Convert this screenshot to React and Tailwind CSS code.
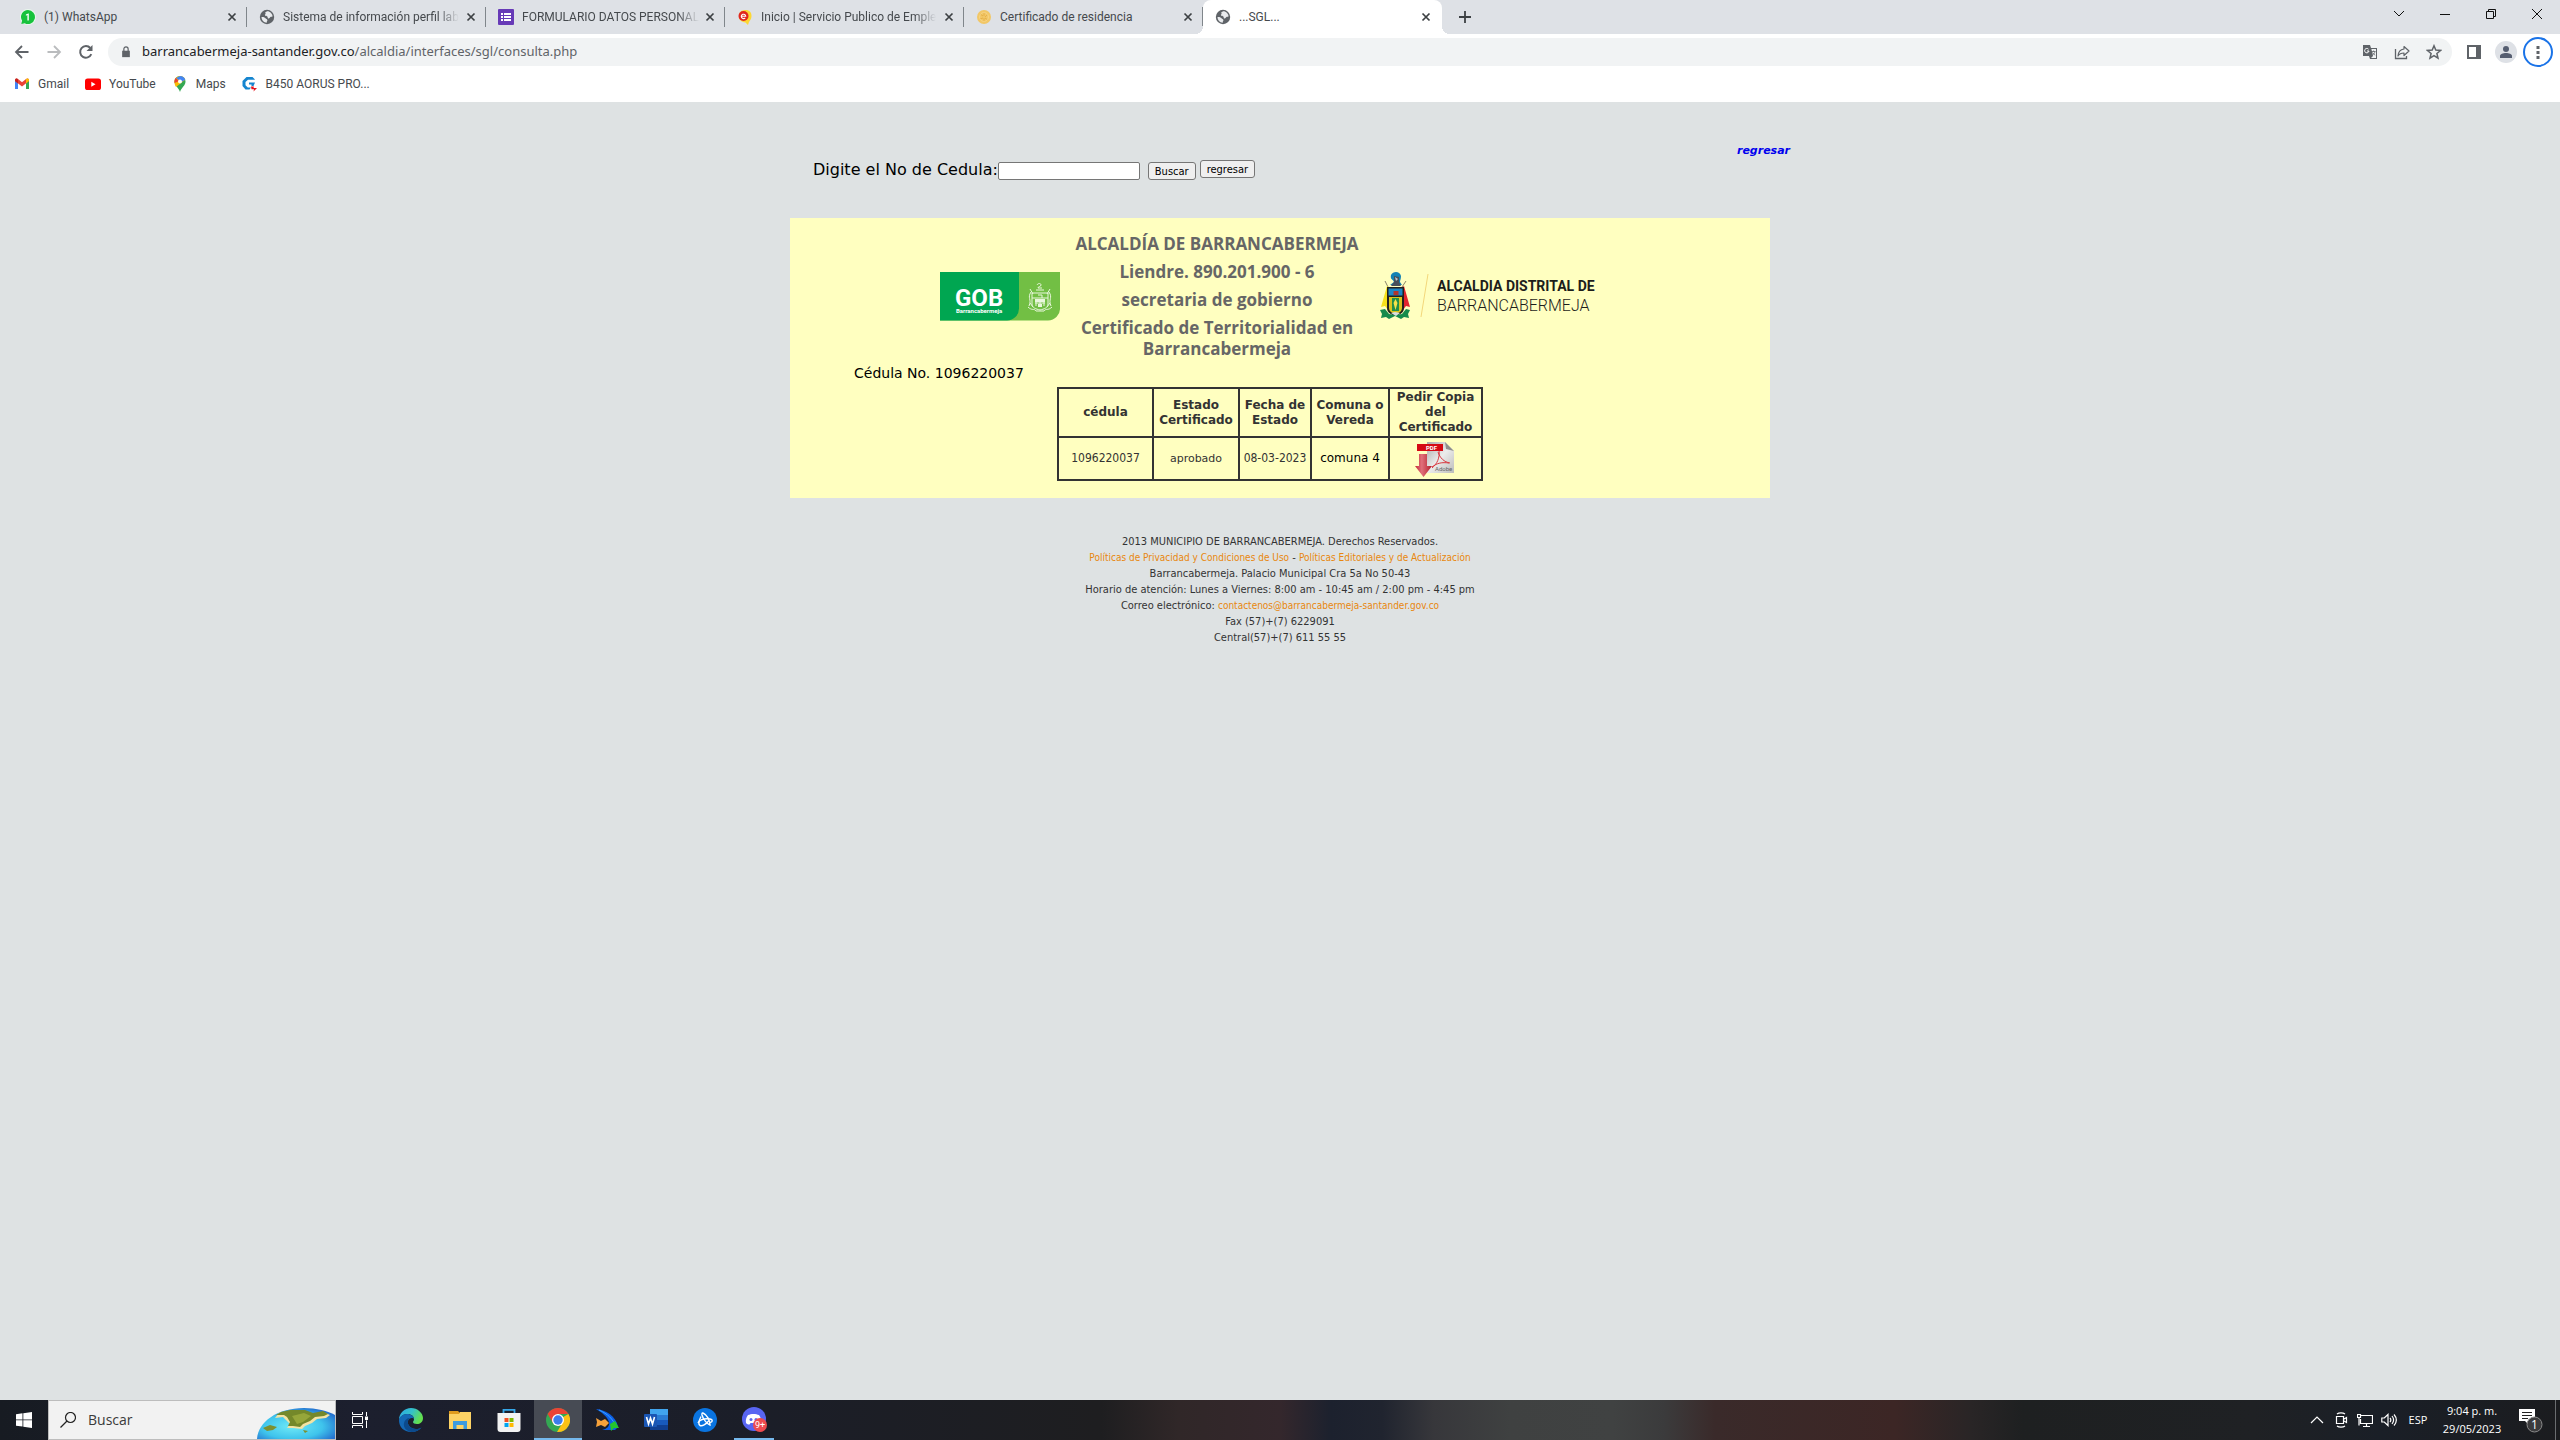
import React from "react";

/* ---------- favicons ---------- */

const WhatsAppIcon = () => (
  <svg viewBox="0 0 16 16" className="size-4 shrink-0">
    <circle cx="8" cy="8" r="8" fill="#e8f8ec" />
    <path d="M8 1a7 7 0 1 1-3.3 13.2L1.3 15l.8-3.3A7 7 0 0 1 8 1z" fill="#17c23c" />
    <path d="M8.8 4.4v7H7.4V6.1l-1.5.6V5.5l2.3-1.1z" fill="#fff" />
  </svg>
);

const GlobeIcon = () => (
  <svg viewBox="0 0 16 16" className="size-4 shrink-0">
    <circle cx="8" cy="8" r="7.2" fill="#5f6368" />
    <path
      d="M2.5 8c1.500-.2 3 .2 4 1.200.6.800 1.700.8 1.900 1.800.1 1-.9 1.300-.6 2.800C4.800 13.600 2.600 11.200 2.500 8zM6 4c.8-1.300 2.300-1.900 3.800-1.600 2.200.8 3.600 2.600 3.800 4.800-.8.8-1.600.2-2.200.9-.8.900-1.200 1.900-2.300 1.300-.8-.500 0-1.500-.8-2C7.400 6.900 6 7.200 5.900 6.100 5.700 5.200 6.900 5.200 6.900 4.700c0-.3-.9-.2-.9-.7z"
      fill="#e9ebee"
    />
  </svg>
);

const FormsIcon = () => (
  <svg viewBox="0 0 16 16" className="size-4 shrink-0">
    <rect width="16" height="16" rx="1" fill="#673ab7" />
    <path d="M3 4h2v2H3zM6 4h7v2H6zM3 7h2v2H3zM6 7h7v2H6zM3 10h2v2H3zM6 10h7v2H6z" fill="#fff" />
  </svg>
);

const EmpleoIcon = () => (
  <svg viewBox="0 0 16 16" className="size-4 shrink-0">
    <path d="M8.500 1c4 0 6 2.500 6 6 0 3-1.500 4.500-2.500 6l-1 3-2.500-2.500C4 13 2 11 2 7s2.500-6 6.500-6z" fill="#fdd835" />
    <circle cx="6.500" cy="7" r="5" fill="#e0261f" />
    <path d="M4.300 7.200h4.400A2.200 2.200 0 1 0 8.200 8.800" fill="none" stroke="#fff" strokeWidth="1.100" />
  </svg>
);

const SealIcon = () => (
  <svg viewBox="0 0 16 16" className="size-4 shrink-0">
    <circle cx="8" cy="8" r="7" fill="#f2c766" />
    <path d="M4 5l3 2M8 3v4M12 5L9 8M4 10l3-1M8 13V9M12 11L9 9" stroke="#e6b048" strokeWidth="1" />
    <circle cx="8" cy="8" r="4.500" fill="none" stroke="#f6d68c" strokeWidth=".8" />
  </svg>
);

/* ---------- browser icons ---------- */

const CloseIcon = () => (
  <svg viewBox="0 0 16 16" className="size-4">
    <path d="M4.500 4.500l7 7M11.500 4.500l-7 7" stroke="#3c4043" strokeWidth="1.700" />
  </svg>
);

const BackIcon = ({ flip, color }) => (
  <svg viewBox="0 0 16 16" className="size-4">
    <path
      d={flip ? "M1.500 8h12M8 2l6 6-6 6" : "M14.500 8h-12M8 2L2 8l6 6"}
      fill="none"
      stroke={color}
      strokeWidth="1.800"
    />
  </svg>
);

const ReloadIcon = () => (
  <svg viewBox="0 0 16 16" className="size-4">
    <path d="M13.300 10.200A5.800 5.800 0 1 1 12.300 4" fill="none" stroke="#5f6368" strokeWidth="2" />
    <path d="M14.500 1v6h-6z" fill="#5f6368" />
  </svg>
);

const LockIcon = () => (
  <svg viewBox="0 0 12 14" className="h-3 w-4">
    <path d="M1.500 5.500h9V13h-9z" fill="#5f6368" />
    <path d="M3.500 6V3.500a2.500 2.500 0 0 1 5 0V6" fill="none" stroke="#5f6368" strokeWidth="1.400" />
  </svg>
);

const TranslateIcon = () => (
  <svg viewBox="0 0 16 16" className="size-4">
    <path d="M1 1h7l1 3h6v11H8l-1-3H1z" fill="#5f6368" />
    <path d="M9.400 5H14v9H9l2-2z" fill="#f1f3f4" />
    <path d="M6.500 5.200A2.200 2.200 0 1 0 7 7H5" fill="none" stroke="#fff" strokeWidth="1" />
    <path d="M9.800 7.500h3.700M11.600 6.500v1M13 7.500c-.4 1.800-1.500 3-2.800 3.800M10.500 8.500c.6 1.200 1.500 2 2.700 2.700" fill="none" stroke="#5f6368" strokeWidth=".8" />
  </svg>
);

const ShareIcon = () => (
  <svg viewBox="0 0 16 16" className="size-4">
    <path d="M1.500 5v9.500h11V12" fill="none" stroke="#5f6368" strokeWidth="1.300" />
    <path d="M10 2.500L15 7l-5 4.500V9C7.500 9 5.500 9.500 4 12c.2-4 2.500-6.500 6-7z" fill="none" stroke="#5f6368" strokeWidth="1.200" strokeLinejoin="round" />
  </svg>
);

const StarIcon = () => (
  <svg viewBox="0 0 16 16" className="size-4">
    <path d="M8 1.800l1.800 4.300 4.700.4-3.600 3 1.100 4.600L8 11.600l-4 2.500 1.100-4.600-3.600-3 4.700-.4z" fill="none" stroke="#5f6368" strokeWidth="1.500" />
  </svg>
);

const SidePanelIcon = () => (
  <svg viewBox="0 0 16 16" className="size-4">
    <path d="M1 1h14v14H1zM3 3v10h7V3z" fill="#5f6368" fillRule="evenodd" />
  </svg>
);

const GmailIcon = () => (
  <svg viewBox="0 0 16 16" className="size-4 shrink-0">
    <path d="M1 4v9h3V7z" fill="#4285f4" />
    <path d="M15 4v9h-3V7z" fill="#34a853" />
    <path d="M1 4.200C1 2.500 2.800 2 4 3l4 3.200L12 3c1.200-1 3-.5 3 1.200V5l-7 5.500L1 5z" fill="#ea4335" />
    <path d="M12 3c1.200-1 3-.5 3 1.200V5l-3 2.400z" fill="#fbbc04" />
    <path d="M1 4.200C1 2.500 2.800 2 4 3v4.400L1 5z" fill="#c5221f" />
  </svg>
);

const YouTubeIcon = () => (
  <svg viewBox="0 0 16 16" className="size-4 shrink-0">
    <rect y="2.500" width="16" height="11.500" rx="2.600" fill="#f00" />
    <path d="M6.300 5.800v5L10.500 8.300z" fill="#fff" />
  </svg>
);

const MapsIcon = () => (
  <svg viewBox="0 0 16 16" className="size-4 shrink-0">
    <path d="M8 0a5.500 5.500 0 0 1 5.500 5.500C13.500 10 9.500 11 8 16 6.500 11 2.500 10 2.500 5.500A5.500 5.500 0 0 1 8 0z" fill="#34a853" />
    <path d="M8 0a5.500 5.500 0 0 1 5.200 3.700L4 11C3 9.500 2.500 8 2.500 5.500A5.500 5.500 0 0 1 8 0z" fill="#fbbc04" />
    <path d="M8 0a5.500 5.500 0 0 1 5.200 3.700L9.500 6 4 2z" fill="#4285f4" />
    <path d="M3.800 2L7 5 2.600 7C2.200 5 2.700 3.200 3.800 2z" fill="#ea4335" />
    <circle cx="8" cy="5.500" r="2" fill="#fff" />
  </svg>
);

const GigaIcon = () => (
  <svg viewBox="0 0 16 16" className="size-4 shrink-0">
    <path d="M13 3.500L10.500 1H4.500L.5 5v5l3 3.500h4L9 11.500H5.800l-2.300-2.200V6L6 3.800h6.500zM7 6.500h6L11.500 10h-2V8.500H7z" fill="#1585cf" />
    <path d="M9 10.500h3L11.500 12H15l-3.500 3.500.5-2.300H9.500z" fill="#e5141d" />
  </svg>
);

/* ---------- crest and document drawings ---------- */

const GobLogo = () => (
  <svg viewBox="0 0 120 49" className="h-[49px] w-[120px] shrink-0" role="img" aria-label="GOB Barrancabermeja">
    <path d="M0 0h120v36a12 12 0 0 1-12 12.500H0z" fill="#72bf44" />
    <path d="M0 0h79v36a12 12 0 0 1-12 12.500H0z" fill="#00a651" />
    <text x="15" y="34" fontSize="24" fontWeight="700" fill="#fff" className="font-['Roboto',sans-serif]">GOB</text>
    <text x="16" y="41" fontSize="6" fontWeight="700" fill="#fff" className="font-['Roboto',sans-serif]">Barrancabermeja</text>
    <g fill="none" stroke="#e9f7dc" strokeWidth="1">
      <path d="M97 13c1-2 4-2 4 0s-3 1-3 3h4M96 18h8M90 17l3 5M110 17l-3 5" />
      <path d="M92 21h16v11c0 4-4 5-8 6-4-1-8-2-8-6zM92 26h16M95 31h10M98 23h4v3M96 28v6M104 28v6M100 29v6" />
      <path d="M91 20c-4 6 1 7-2 14M109 20c4 6-1 7 2 14M88 35c4 4 6 1 8 4h8c2-3 4 0 8-4M93 35l-3-4M107 35l3-4" />
    </g>
    <path d="M95 27h10v3H95zM98 32h4v3h-4z" fill="#e9f7dc" />
  </svg>
);

const Crest = () => (
  <svg viewBox="0 0 30 48" className="h-12 w-[30px] shrink-0" aria-hidden="true">
    <path d="M5 9l3 6M26 9l-4 6" stroke="#8a8468" strokeWidth="1" />
    <path d="M7 14L1 35l4-1 3 4 2-4V16z" fill="#f6e01b" />
    <path d="M24 14l6 21-4-1-3 4-2-4V16z" fill="#e2232e" />
    <path d="M11 3c2-4 9-4 10 1 0 3-1 4-1 6l2 3H10l4-3c-1-3-4-2-3-7z" fill="#1482b4" />
    <path d="M14 4l5 1v5l2 4H11l3-4z" fill="#48505a" />
    <path d="M15 5l3 2-2 2z" fill="#c4cbd2" />
    <path d="M7 15h17v21c0 5-5 7-8.500 8C12 43 7 41 7 36z" fill="#23211d" />
    <path d="M8.500 16.500h14v7h-14z" fill="#1c86c7" />
    <path d="M13.500 19h5v4h-5z" fill="#b0342d" />
    <path d="M9 25h13v11c0 4-4 5-6.500 6C13 41 9 40 9 36z" fill="#d9c41e" />
    <path d="M12 26h7v13h-7z" fill="#238f49" />
    <path d="M15.500 27l2 4-2 7-2-7z" fill="#f4e44a" />
    <path d="M0 38l5-1 4 5 6 1 7-1 4-5 4 1-2 4 1 4-5-1-3 2-6-3-6 3-3-2-5 1 1-4z" fill="#158a4c" />
    <path d="M11 41l4-1 5 1-4 3z" fill="#d8dde0" />
  </svg>
);

const PdfIcon = () => (
  <svg viewBox="0 0 40 36" className="h-9 w-10" aria-hidden="true">
    <defs>
      <linearGradient id="sheet" x1="0" y1="0" x2="1" y2="1">
        <stop offset="0" stopColor="#a8a8a6" />
        <stop offset=".5" stopColor="#ececec" />
        <stop offset="1" stopColor="#bdbdbb" />
      </linearGradient>
      <linearGradient id="arrow" x1="0" y1="0" x2="1" y2="0">
        <stop offset="0" stopColor="#c62a38" />
        <stop offset=".4" stopColor="#e0707a" />
        <stop offset="1" stopColor="#b31d2a" />
      </linearGradient>
    </defs>
    <path d="M13 1h18l9 9v22H13z" fill="url(#sheet)" />
    <path d="M31 1l9 9-8-2z" fill="#8f8f8d" />
    <path d="M25 9c1 8-2 14-7 18M24 11c2 6 6 10 12 11M18 26c5-4 10-5 17-4" fill="none" stroke="#d9383f" strokeWidth="1" />
    <path d="M3 3h26v7H3z" fill="#d50a14" />
    <text x="12" y="9" fontSize="6" fontWeight="700" fill="#fff" className="font-['Roboto',sans-serif]">PDF</text>
    <text x="21" y="30" fontSize="6" fill="#666" className="font-['Roboto',sans-serif]">Adobe</text>
    <path d="M5 13h8v12h5L9.500 36 1 25h4z" fill="url(#arrow)" />
  </svg>
);

/* ---------- taskbar drawings ---------- */

const WindowsIcon = () => (
  <svg viewBox="0 0 16 16" className="size-4">
    <path d="M0 2.200L6.500 1.300v6.200H0zM7.300 1.200L16 0v7.500H7.300zM0 8.300h6.500v6.200L0 13.700zM7.300 8.300H16V16l-8.700-1.300z" fill="#fff" />
  </svg>
);

const EarthArt = () => (
  <svg viewBox="0 0 78 31" className="h-[31px] w-[78px] shrink-0 self-end" aria-hidden="true">
    <defs>
      <radialGradient id="sea" cx=".45" cy=".6" r=".65">
        <stop offset="0" stopColor="#6fe9f6" />
        <stop offset=".6" stopColor="#3fc4ec" />
        <stop offset="1" stopColor="#2470cf" />
      </radialGradient>
    </defs>
    <path d="M0 31C1 14 20 0 47 0c12 0 24 3 31 7v24z" fill="url(#sea)" />
    <path d="M22 5l10-2 16 0 8 3 10-2 7 3-4 3-9 1-5 4-7 3-3 3-9-1-6 0 3-4-4-4-3-3-8 1z" fill="#f3e3a4" />
    <path d="M24 4l9-2 15 0 8 3 10-2 5 3-4 2-9 1-5 4-7 3-3 3-7-1-5 0 2-4-3-5-3-2-8 0z" fill="#74882a" />
    <path d="M35 8l12-3 7 3-8 6-6 2z" fill="#96a63a" />
    <path d="M6 20l7-3 7 2-4 3-6 1z" fill="#7d902f" />
    <path d="M46 22l5 1-3 2z" fill="#7d902f" />
  </svg>
);

const TaskViewIcon = () => (
  <svg viewBox="0 0 16 16" className="size-4">
    <path d="M.5 0v2.500h10V0M.5 16v-2.500h10V16M.5 4.500h10v7H.5zM14.500 0v4M14.500 8.500V16" fill="none" stroke="#fff" strokeWidth="1" />
    <path d="M13 4.500h3V8h-3z" fill="#fff" />
  </svg>
);

const EdgeIcon = () => (
  <svg viewBox="0 0 24 24" className="size-6">
    <defs>
      <linearGradient id="edgeTop" x1="0" y1="0" x2="1" y2=".4">
        <stop offset="0" stopColor="#2aa7e8" />
        <stop offset=".55" stopColor="#35c1c9" />
        <stop offset="1" stopColor="#63e04f" />
      </linearGradient>
    </defs>
    <path d="M0 12C0 5 5.500 0 12 0s12 5 12 10c0 4-3 6-6 6-2.500 0-4-1-4-2s1-1 1-3c0-2.500-2.500-5-6.500-5C4 6 1 9 0 12z" fill="url(#edgeTop)" />
    <path d="M0 12.500C0 9 3.500 6 8 6c4 0 7 2.500 7 5-1-1.500-5-1.500-6 2-1 4 3 8 8 8 2 0 3.500-.5 5.500-1.500C20.500 22 17 24 12 24 5 24 0 19 0 12.500z" fill="#1468b5" />
    <path d="M9 13c-1 4 3 8 8 8 2 0 3.500-.5 5.500-1.500C20.500 22 17 24 12.500 24 7 23 4 19 5 15c.5-3 3-5 6-5-1 .5-2 2-2 3z" fill="#0c4a8c" />
  </svg>
);

const FolderIcon = () => (
  <svg viewBox="0 0 24 24" className="size-6">
    <path d="M1 3h9l2 2h11v4H1z" fill="#e09c1e" />
    <path d="M1 6h10l1-2h11v17H1z" fill="#fdd365" />
    <path d="M5 13h14v8h-3.500v-4h-7v4H5z" fill="#3c9be0" />
  </svg>
);

const StoreIcon = () => (
  <svg viewBox="0 0 24 24" className="size-6">
    <path d="M6.500 7V1.800h11V7" fill="none" stroke="#35a7e8" strokeWidth="1.800" />
    <path d="M.5 5h23v16a3 3 0 0 1-3 3h-17a3 3 0 0 1-3-3z" fill="#f2f2f2" />
    <path d="M7.500 10h4v4h-4z" fill="#f25022" />
    <path d="M12.500 10h4v4h-4z" fill="#7fba00" />
    <path d="M7.500 15h4v4h-4z" fill="#00a4ef" />
    <path d="M12.500 15h4v4h-4z" fill="#ffb900" />
  </svg>
);

const ChromeIcon = () => (
  <svg viewBox="0 0 24 24" className="size-6">
    <circle cx="12" cy="12" r="12" fill="#34a853" />
    <path d="M12 12L22.400 6A12 12 0 0 1 12 24l-1-.1L17 14z" fill="#fbc116" />
    <path d="M12 6h10.400A12 12 0 0 0 1.600 6L7 15z" fill="#ea4335" />
    <circle cx="12" cy="12" r="6" fill="#fff" />
    <circle cx="12" cy="12" r="4.700" fill="#3b7ded" />
  </svg>
);

const FishIcon = () => (
  <svg viewBox="0 0 24 24" className="size-6">
    <path d="M1 1c10 1 20 7 22 18l-3 3-13 0c5-1 8-4 7-8C12 8 6 4 1 1z" fill="#0c5fe8" />
    <path d="M4 2c9 4 14 9 17 17" fill="none" stroke="#3aa4ff" strokeWidth="1" />
    <path d="M1 10l5 3 4-2 4 4-4 4-4-2-5 2 1-5z" fill="#f6a13a" />
    <path d="M15 16l5-3 4 7-5 0-3 3z" fill="#24c52e" />
  </svg>
);

const WordIcon = () => (
  <svg viewBox="0 0 24 24" className="size-6">
    <path d="M6 1h18v6H6z" fill="#41a5ee" />
    <path d="M6 7h18v5H6z" fill="#2b7cd3" />
    <path d="M6 12h18v5H6z" fill="#185abd" />
    <path d="M6 17h18v5H6z" fill="#103f91" />
    <rect y="6" width="13" height="13" rx="1" fill="#1a56b4" />
    <path d="M2.500 9l2 7 2-6 2 6 2-7" fill="none" stroke="#fff" strokeWidth="1.600" />
  </svg>
);

const BattleNetIcon = () => (
  <svg viewBox="0 0 24 24" className="size-6">
    <circle cx="12" cy="12" r="12" fill="#0a74e0" />
    <g fill="none" stroke="#fff" strokeWidth="1.400">
      <path d="M10 5c4 2 7 7 7 12-3-1-7-6-8-10-.3-1.500.2-2.500 1-2z" />
      <path d="M5 15c1-3 6-5 12-4 3 .6 3 2.600 0 3.600" />
      <path d="M8 8.500c-2 4-2.500 8-1 9 2 1 6-1 9-5" />
    </g>
  </svg>
);

const DiscordIcon = () => (
  <svg viewBox="0 0 26 26" className="size-[26px]">
    <circle cx="13" cy="12" r="12" fill="#5865f2" />
    <path d="M7 8c3-1.500 8-1.500 11 0 2 3 2.500 5 2 8-1 1-2 1.500-3.500 1.500L15.500 16h-6l-1 1.500c-1.500 0-2.500-.5-3.500-1.500C4.500 13 5 11 7 8z" fill="#fff" />
    <circle cx="10" cy="12.500" r="1.500" fill="#5865f2" />
    <circle cx="15" cy="12.500" r="1.500" fill="#5865f2" />
    <circle cx="19" cy="18" r="7" fill="#ee4b50" />
    <text x="19" y="21" fontSize="9" textAnchor="middle" fill="#fff" className="font-['Roboto',sans-serif]">9+</text>
  </svg>
);

/* ---------- data ---------- */

const tabs = [
  { title: "(1) WhatsApp", Icon: WhatsAppIcon },
  { title: "Sistema de información perfil lab", Icon: GlobeIcon, fade: true },
  { title: "FORMULARIO DATOS PERSONAL", Icon: FormsIcon, fade: true },
  { title: "Inicio | Servicio Publico de Emple", Icon: EmpleoIcon, fade: true },
  { title: "Certificado de residencia", Icon: SealIcon },
];

const bookmarks = [
  { label: "Gmail", Icon: GmailIcon },
  { label: "YouTube", Icon: YouTubeIcon },
  { label: "Maps", Icon: MapsIcon },
  { label: "B450 AORUS PRO...", Icon: GigaIcon },
];

const apps = [
  { name: "Edge", Icon: EdgeIcon },
  { name: "Explorador de archivos", Icon: FolderIcon },
  { name: "Store", Icon: StoreIcon },
  { name: "Chrome", Icon: ChromeIcon, state: "active" },
  { name: "Juego", Icon: FishIcon },
  { name: "Word", Icon: WordIcon },
  { name: "Battle.net", Icon: BattleNetIcon },
  { name: "Discord", Icon: DiscordIcon, state: "open" },
];

const condensed = "font-['DejaVu_Sans_Condensed','DejaVu_Sans',sans-serif]";

/* ---------- browser chrome ---------- */

function Tab({ title, Icon, fade }) {
  return (
    <div className="flex h-full w-[239px] min-w-0 items-center">
      <button className="flex min-w-0 flex-1 items-center gap-2 pl-3 text-left">
        <Icon />
        <span
          className={`whitespace-nowrap ${fade ? "[mask-image:linear-gradient(to_right,black_88%,transparent)]" : ""}`}
        >
          {title}
        </span>
      </button>
      <button aria-label="Cerrar pestaña" className="mr-1.5 ml-1">
        <CloseIcon />
      </button>
      <span className="h-5 w-px bg-[#80868b]" />
    </div>
  );
}

function TabStrip() {
  return (
    <div className="flex h-[34px] items-center bg-[#dee1e6] pl-2 text-xs text-[#45494d]">
      {tabs.map((t) => (
        <Tab key={t.title} {...t} />
      ))}
      <div className="relative flex h-full w-[239px] items-center rounded-t-lg bg-white">
        <span className="absolute bottom-0 -left-2 size-2 bg-[radial-gradient(circle_at_0_0,#dee1e6_8px,#ffffff_8px)]" />
        <span className="absolute -right-2 bottom-0 size-2 bg-[radial-gradient(circle_at_100%_0,#dee1e6_8px,#ffffff_8px)]" />
        <button className="flex flex-1 items-center gap-2 pl-3 text-left">
          <GlobeIcon />
          <span>...SGL...</span>
        </button>
        <button aria-label="Cerrar pestaña" className="mr-2">
          <CloseIcon />
        </button>
      </div>
      <button aria-label="Nueva pestaña" className="ml-4">
        <svg viewBox="0 0 14 14" className="size-3.5">
          <path d="M7 1v12M1 7h12" stroke="#3c4043" strokeWidth="1.800" />
        </svg>
      </button>
      <div className="ml-auto flex h-7 self-start">
        {[
          ["Buscar pestañas", "M1 3l5 5 5-5"],
          ["Minimizar", "M1 6.500h10"],
          ["Restaurar", "M1.500 3.500h7v7h-7zM3.500 3.500v-2h7v7h-2"],
          ["Cerrar", "M1 1l10 10M11 1L1 11"],
        ].map(([label, d]) => (
          <button key={label} aria-label={label} className="flex w-[46px] items-center justify-center">
            <svg viewBox="0 0 12 12" className="size-3">
              <path d={d} fill="none" stroke="#111" strokeWidth="1" />
            </svg>
          </button>
        ))}
      </div>
    </div>
  );
}

function IconButton({ label, children }) {
  return (
    <button aria-label={label} className="flex size-8 shrink-0 items-center justify-center">
      {children}
    </button>
  );
}

function Toolbar() {
  return (
    <div className="flex h-9 items-center bg-white px-1.5">
      <IconButton label="Atrás">
        <BackIcon color="#5f6368" />
      </IconButton>
      <IconButton label="Adelante">
        <BackIcon flip color="#babcbe" />
      </IconButton>
      <IconButton label="Recargar">
        <ReloadIcon />
      </IconButton>
      <div className="mx-1.5 flex h-7 flex-1 items-center rounded-full bg-[#f1f3f4] pr-0.5 pl-2.5">
        <LockIcon />
        <p className="ml-2 flex-1 font-['Noto_Sans',sans-serif] text-[13px] text-[#5f6368]">
          <span className="text-[#202124]">barrancabermeja-santander.gov.co</span>
          /alcaldia/interfaces/sgl/consulta.php
        </p>
        <IconButton label="Traducir">
          <TranslateIcon />
        </IconButton>
        <IconButton label="Compartir">
          <ShareIcon />
        </IconButton>
        <IconButton label="Marcador">
          <StarIcon />
        </IconButton>
      </div>
      <IconButton label="Panel lateral">
        <SidePanelIcon />
      </IconButton>
      <IconButton label="Perfil">
        <svg viewBox="0 0 22 22" className="size-[22px]">
          <circle cx="11" cy="11" r="11" fill="#dee1e6" />
          <circle cx="11" cy="8" r="3" fill="#565e71" />
          <path d="M5 17v-2c0-2 3-3 6-3s6 1 6 3v2z" fill="#565e71" />
        </svg>
      </IconButton>
      <IconButton label="Menú">
        <svg viewBox="0 0 30 30" className="size-[30px]">
          <circle cx="15" cy="15" r="14" fill="#fff" stroke="#1a73e8" strokeWidth="2" />
          <path d="M13.500 9h3v3h-3zM13.500 14h3v3h-3zM13.500 19h3v3h-3z" fill="#5f6368" />
        </svg>
      </IconButton>
    </div>
  );
}

function Bookmarks() {
  return (
    <nav className="flex h-8 items-center gap-4 bg-white px-3.5 pb-1 text-xs text-[#45494d]">
      {bookmarks.map(({ label, Icon }) => (
        <a key={label} href="#" className="flex items-center gap-2">
          <Icon />
          {label}
        </a>
      ))}
    </nav>
  );
}

/* ---------- page ---------- */

const pageButton = `h-[18px] rounded-[3px] border border-[#767676] bg-[#efefef] px-1.5 text-[11px] leading-none text-black ${condensed}`;

function SearchForm() {
  return (
    <form className="flex h-[26px] items-center pl-[43px]" onSubmit={(e) => e.preventDefault()}>
      <label htmlFor="cedula" className="mb-0.5 text-base leading-6">
        Digite el No de Cedula:
      </label>
      <input id="cedula" className="mr-2 h-[18px] w-[142px] rounded-xs border border-[#767676] bg-white px-1 text-xs" />
      <button className={pageButton}>Buscar</button>
      <button type="button" className={`mb-1 ml-1 ${pageButton}`}>
        regresar
      </button>
    </form>
  );
}

function ResultTable() {
  const head = "border-2 border-[#333333] p-0 text-center font-bold";
  const cell = "border-2 border-[#333333] p-0 text-center";
  return (
    <table className="mt-1.5 ml-[267px] table-fixed border-collapse text-xs leading-[15px] text-[#333333]">
      <colgroup>
        <col className="w-[95px]" />
        <col className="w-[86px]" />
        <col className="w-[72px]" />
        <col className="w-[78px]" />
        <col className="w-[93px]" />
      </colgroup>
      <thead>
        <tr className="h-[49px]">
          <th className={head}>cédula</th>
          <th className={head}>Estado<br />Certificado</th>
          <th className={head}>Fecha de<br />Estado</th>
          <th className={head}>Comuna o<br />Vereda</th>
          <th className={head}>Pedir Copia<br />del<br />Certificado</th>
        </tr>
      </thead>
      <tbody>
        <tr className="h-[43px]">
          <td className={`${cell} ${condensed}`}>1096220037</td>
          <td className={`${cell} text-[11px]`}>aprobado</td>
          <td className={`${cell} ${condensed}`}>08-03-2023</td>
          <td className={`${cell} text-black`}>comuna 4</td>
          <td className={cell}>
            <a href="#" aria-label="Descargar certificado" className="flex justify-center pr-1">
              <PdfIcon />
            </a>
          </td>
        </tr>
      </tbody>
    </table>
  );
}

function Certificate() {
  return (
    <section className="mx-5 mt-[34px] bg-[#ffffc0] pt-[15px] pb-[17px]">
      <div className="flex items-center pl-[150px]">
        <GobLogo />
        <div className="w-[314px] space-y-[7px] px-2 text-center font-['Open_Sans',sans-serif] text-[17px] leading-[21px] font-bold text-[#666666]">
          <h1>ALCALDÍA DE BARRANCABERMEJA</h1>
          <h2>Liendre. 890.201.900 - 6</h2>
          <h2>secretaria de gobierno</h2>
          <h2>
            Certificado de Territorialidad en
            <br />
            Barrancabermeja
          </h2>
        </div>
        <div className="flex items-center pl-1.5">
          <Crest />
          <svg viewBox="0 0 10 44" className="ml-[9px] h-11 w-2.5" aria-hidden="true">
            <path d="M9 0L2 43" stroke="#f3d77a" strokeWidth="1" />
          </svg>
          <div className="ml-2 font-['Roboto',sans-serif] text-[#1d1d1b]">
            <p className="text-sm leading-[19px] font-bold">ALCALDIA DISTRITAL DE</p>
            <p className="text-base leading-[19px] font-light">BARRANCABERMEJA</p>
          </div>
        </div>
      </div>
      <p className="mt-1.5 pl-16 text-sm leading-4">Cédula No. 1096220037</p>
      <ResultTable />
    </section>
  );
}

function PageFooter() {
  const link = "text-[10px] text-[#e8870e]";
  return (
    <footer className={`mt-9 text-center text-[11px] leading-4 text-[#333333] ${condensed}`}>
      <p>2013 MUNICIPIO DE BARRANCABERMEJA. Derechos Reservados.</p>
      <p>
        <a href="#" className={link}>Políticas de Privacidad y Condiciones de Uso</a> -{" "}
        <a href="#" className={link}>Políticas Editoriales y de Actualización</a>
      </p>
      <p>Barrancabermeja. Palacio Municipal Cra 5a No 50-43</p>
      <p>Horario de atención: Lunes a Viernes: 8:00 am - 10:45 am / 2:00 pm - 4:45 pm</p>
      <p>
        Correo electrónico: <a href="#" className={link}>contactenos@barrancabermeja-santander.gov.co</a>
      </p>
      <p>Fax (57)+(7) 6229091</p>
      <p>Central(57)+(7) 611 55 55</p>
    </footer>
  );
}

/* ---------- taskbar ---------- */

const TrayIcon = ({ children }) => (
  <svg viewBox="0 0 16 16" className="mx-1 size-4" fill="none" stroke="#fff" strokeWidth="1.200">
    {children}
  </svg>
);

function Taskbar() {
  return (
    <div className="flex h-10 items-center bg-[linear-gradient(90deg,#171b22_0%,#1c1f2e_14%,#1b1e28_30%,#1e1e20_43%,#302728_46%,#34272c_50%,#1c212e_52%,#20242f_54%,#37373b_56%,#3f4141_59%,#404242_63%,#3b3b3c_65%,#3a2a2a_67%,#3c2625_74%,#292526_77%,#1e2021_79%,#1f2124_88%,#1a1f27_93%,#1b1c1f_100%)] font-['Open_Sans',sans-serif] text-white">
      <button aria-label="Inicio" className="flex w-12 justify-center">
        <WindowsIcon />
      </button>
      <label className="mr-[3px] flex h-full w-72 items-center border border-[#bdbdbd] bg-[#f2f2f2] pl-[11px]">
        <svg viewBox="0 0 16 16" className="size-4 shrink-0">
          <circle cx="10.500" cy="5.500" r="5" fill="none" stroke="#222" strokeWidth="1.200" />
          <path d="M7 9l-6.500 6.500" stroke="#222" strokeWidth="1.200" />
        </svg>
        <input
          aria-label="Buscar"
          placeholder="Buscar"
          className="ml-3 min-w-0 flex-1 bg-transparent text-sm outline-none placeholder:text-[#3a3a3a]"
        />
        <EarthArt />
      </label>
      <button aria-label="Vista de tareas" className="flex w-[42px] justify-center">
        <TaskViewIcon />
      </button>
      <div className="ml-1.5 flex h-full gap-px">
        {apps.map(({ name, Icon, state }) => (
          <button
            key={name}
            aria-label={name}
            className={`relative flex w-12 items-center justify-center ${state === "active" ? "bg-[#474b54]" : ""}`}
          >
            <Icon />
            {state && (
              <span className={`absolute bottom-0 h-0.5 bg-[#76b9ed] ${state === "active" ? "w-12" : "w-10"}`} />
            )}
          </button>
        ))}
      </div>
      <div className="ml-auto flex h-full items-center text-[11px]">
        <TrayIcon>
          <path d="M2 11l6-6 6 6" />
        </TrayIcon>
        <TrayIcon>
          <path d="M3.500 4.500h7v7h-7zM11 7l2.500-1.500v5L11 9M4 2c2-1.500 6-1.500 8 0M4 14c2 1.500 6 1.500 8 0" />
        </TrayIcon>
        <TrayIcon>
          <path d="M4 3.500h11.500v8H3.500V7M9.500 12v2.500M6 14.500h7M.5 2.500h3v3h-3zM2 5.500v8" />
        </TrayIcon>
        <TrayIcon>
          <path d="M.8 6h2.500L7 2.500v11L3.300 10H.8zM9 6c1 1.200 1 2.800 0 4M11 4c2 2.500 2 5.500 0 8M13 2.500c3 3.500 3 7.500 0 11" />
        </TrayIcon>
        <span className="w-[34px] text-center">ESP</span>
        <div className="w-[74px] text-center leading-[18px]">
          <p>9:04 p. m.</p>
          <p>29/05/2023</p>
        </div>
        <button aria-label="Notificaciones" className="mr-0.5 flex w-11 justify-center">
          <svg viewBox="0 0 26 26" className="size-[26px]">
            <path d="M1 2h16v12h-6v4l-4-4H1z" fill="#fff" />
            <path d="M4 5.500h10M4 8.500h10M4 11.500h6" stroke="#222" strokeWidth="1" />
            <circle cx="16.500" cy="17.500" r="7.500" fill="#3b3b3d" stroke="#8a8a8a" strokeWidth="1" />
            <text x="16.500" y="22" fontSize="12" textAnchor="middle" fill="#fff">1</text>
          </svg>
        </button>
        <span className="mr-1 h-full w-px bg-[#6b6d70]" />
      </div>
    </div>
  );
}

export default function App() {
  return (
    <div className="flex min-h-screen flex-col bg-[#dee2e3] font-['Roboto',sans-serif]">
      <header>
        <TabStrip />
        <Toolbar />
        <Bookmarks />
      </header>
      <main className="flex-1 pt-10 font-['DejaVu_Sans',sans-serif] text-black">
        <div className="mx-auto max-w-[1020px]">
          <div className="flex h-4 justify-end">
            <a href="#" className="text-[11px] leading-[18px] font-bold text-[#0000ee] italic">
              regresar
            </a>
          </div>
          <SearchForm />
          <Certificate />
          <PageFooter />
        </div>
      </main>
      <Taskbar />
    </div>
  );
}
